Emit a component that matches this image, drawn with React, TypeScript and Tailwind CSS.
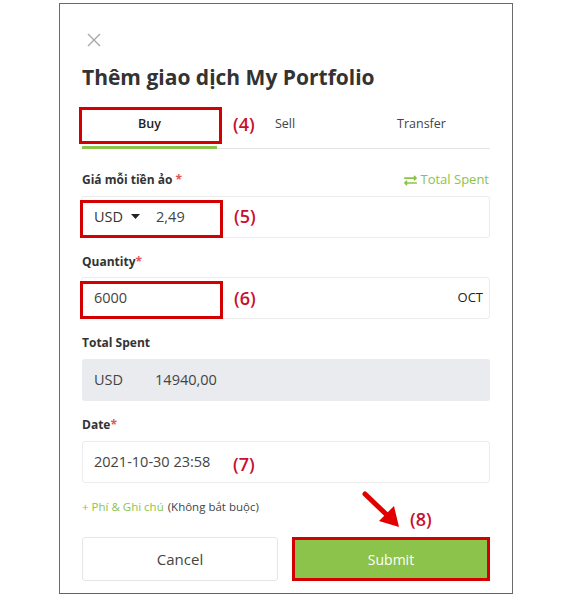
import React from "react";
import { FaExchangeAlt } from "react-icons/fa";

const RedBox = ({ className }: { className: string }) => (
  <div className={"absolute border-[3px] border-[#d40000] pointer-events-none " + className} />
);

const Note = ({ children, className }: { children: React.ReactNode; className: string }) => (
  <div className={"absolute text-[18px] font-semibold text-[#c8102e] leading-none " + className}>{children}</div>
);

export default function App() {
  return (
    <div className="w-[572px] h-[600px] bg-white pt-[3px] pl-[59px]" style={{ fontFamily: '"Open Sans", "Noto Sans", sans-serif' }}>
      <div className="relative w-[454px] h-[591px] border border-[#6b6b6b] border-b-[#a84444] bg-white px-[22px]">
        {/* close */}
        <div className="mt-[29px] ml-[5px] w-[14px] h-[14px]">
          <svg width="14" height="14" viewBox="0 0 14 14">
            <path d="M1 1L13 13M13 1L1 13" stroke="#a8a8a8" strokeWidth="1.4" />
          </svg>
        </div>
        <h1 className="mt-[15px] h-[30px] leading-[30px] text-[21px] font-bold text-[#333]">Thêm giao dịch My Portfolio</h1>

        {/* tabs */}
        <div className="relative mt-[15px] h-[42px] flex border-b border-[#e4e4e4] text-[12.5px]">
          <div className="relative w-[135px] flex items-center justify-center pb-[6px] font-semibold text-[#222]">
            Buy
            <div className="absolute left-0 right-0 bottom-[-1px] h-[3px] bg-[#8cc34b]" />
            <RedBox className="left-[-3px] top-0 w-[143px] h-[37px]" />
          </div>
          <div className="w-[136px] flex items-center justify-center pb-[6px] text-[#444]">Sell</div>
          <div className="flex-1 flex items-center justify-center pb-[6px] text-[#444]">Transfer</div>
          <Note className="left-[151px] top-[8px]">(4)</Note>
        </div>

        {/* price */}
        <div className="mt-[23px] h-[16px] flex items-center justify-between">
          <span className="text-[12px] font-bold text-[#333]">
            Giá mỗi tiền ảo <span className="text-[#e05555]">*</span>
          </span>
          <span className="flex items-center gap-[4px] mr-[1px] text-[13px] text-[#8cc34b]">
            <FaExchangeAlt size={13} />
            Total Spent
          </span>
        </div>
        <div className="relative mt-[8px] h-[42px] ml-[-1px] border border-[#ececec] rounded-[3px] flex items-center pl-[12px] text-[14.5px] text-[#444]">
          <span className="text-[#333]">USD</span>
          <svg className="ml-[8px]" width="9" height="6" viewBox="0 0 9 6">
            <path d="M0 0H9L4.5 5Z" fill="#222" />
          </svg>
          <span className="ml-[16px]">2,49</span>
          <RedBox className="left-[-2px] top-[3px] w-[143px] h-[38px]" />
          <Note className="left-[152px] top-[10px]">(5)</Note>
        </div>

        {/* quantity */}
        <div className="mt-[16px] h-[16px] flex items-center text-[12px] font-bold text-[#333]">
          Quantity<span className="text-[#e05555]">*</span>
        </div>
        <div className="relative mt-[7px] h-[42px] ml-[-1px] border border-[#ececec] rounded-[3px] flex items-center justify-between pl-[12px] pr-[6px] text-[14.5px] text-[#444]">
          <span>6000</span>
          <span className="text-[13px] text-[#222]">OCT</span>
          <RedBox className="left-[-2px] top-[3px] w-[143px] h-[38px]" />
          <Note className="left-[152px] top-[11px]">(6)</Note>
        </div>

        {/* total spent */}
        <div className="mt-[16px] h-[16px] flex items-center text-[12px] font-bold text-[#333]">Total Spent</div>
        <div className="mt-[8px] h-[42px] bg-[#e9ebee] rounded-[3px] flex items-center pl-[12px] text-[14.5px] text-[#444]">
          <span>USD</span>
          <span className="ml-[32px]">14940,00</span>
        </div>

        {/* date */}
        <div className="mt-[16px] h-[16px] flex items-center text-[12px] font-bold text-[#333]">
          Date<span className="text-[#e05555]">*</span>
        </div>
        <div className="relative mt-[8px] h-[42px] border border-[#ececec] rounded-[3px] flex items-center pl-[11px] text-[14.5px] text-[#444]">
          <span>2021-10-30 23:58</span>
          <Note className="left-[150px] top-[13px]">(7)</Note>
        </div>

        {/* fees */}
        <div className="mt-[16px] h-[16px] flex items-center text-[11.5px] text-[#444]">
          <span className="text-[#8cc34b]">+ Phí &amp; Ghi chú</span>
          <span className="ml-[4px]">(Không bắt buộc)</span>
        </div>

        {/* buttons */}
        <div className="relative mt-[22px] h-[44px] flex gap-[14px]">
          <button className="w-[196px] h-[44px] border border-[#e6e6e6] rounded-[3px] bg-white text-[15px] text-[#444]">Cancel</button>
          <button className="relative flex-1 h-[44px] bg-[#8cc34b] text-white text-[14px] font-medium rounded-[2px]">
            Submit
            <RedBox className="left-0 top-0 right-0 bottom-0" />
          </button>
          <Note className="left-[328px] top-[-27px]">(8)</Note>
          <svg className="absolute left-[280px] top-[-46px]" width="42" height="40" viewBox="0 0 42 40">
            <path d="M3 3L26 25" stroke="#e00000" strokeWidth="5" strokeLinecap="round" />
            <path d="M17 30L37 36L32 15Z" fill="#e00000" />
          </svg>
        </div>
      </div>
    </div>
  );
}
